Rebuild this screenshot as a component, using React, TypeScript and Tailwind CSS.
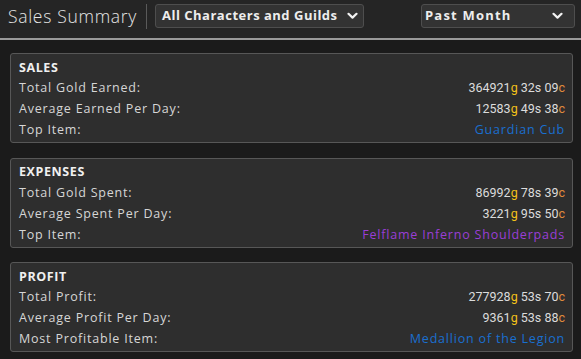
import React from 'react';

type Money = { g: string; s: string; c: string };

interface Row {
  label: string;
  money?: Money;
  item?: { name: string; color: string };
}

interface Section {
  title: string;
  rows: Row[];
}

const sections: Section[] = [
  {
    title: 'SALES',
    rows: [
      { label: 'Total Gold Earned:', money: { g: '364921', s: '32', c: '09' } },
      { label: 'Average Earned Per Day:', money: { g: '12583', s: '49', c: '38' } },
      { label: 'Top Item:', item: { name: 'Guardian Cub', color: 'text-[#1a6fd0]' } },
    ],
  },
  {
    title: 'EXPENSES',
    rows: [
      { label: 'Total Gold Spent:', money: { g: '86992', s: '78', c: '39' } },
      { label: 'Average Spent Per Day:', money: { g: '3221', s: '95', c: '50' } },
      { label: 'Top Item:', item: { name: 'Felflame Inferno Shoulderpads', color: 'text-[#9a3ed6]' } },
    ],
  },
  {
    title: 'PROFIT',
    rows: [
      { label: 'Total Profit:', money: { g: '277928', s: '53', c: '70' } },
      { label: 'Average Profit Per Day:', money: { g: '9361', s: '53', c: '88' } },
      { label: 'Most Profitable Item:', item: { name: 'Medallion of the Legion', color: 'text-[#1a6fd0]' } },
    ],
  },
];

const Chevron = () => (
  <svg width="11" height="8" viewBox="0 0 11 8" fill="none">
    <path d="M1.5 1.8 L5.5 5.6 L9.5 1.8" stroke="#f2f2f2" strokeWidth="2.2" strokeLinecap="round" strokeLinejoin="round" />
  </svg>
);

const MoneyText: React.FC<{ m: Money }> = ({ m }) => (
  <span className="font-['Roboto',sans-serif] text-[12.5px] text-[#dcdcdc]">
    {m.g}<span className="text-[#f4c21a]">g</span> {m.s}s {m.c}<span className="text-[#e08a3c]">c</span>
  </span>
);

const App: React.FC = () => {
  return (
    <div className="w-[581px] h-[359px] bg-[#1b1b1b] overflow-hidden font-['Open_Sans',sans-serif]">
      {/* Header */}
      <div className="h-[40px] bg-[#252525] border-b-2 border-[#9a9a9a] flex items-start pt-[4px]">
        <div className="h-[24px] flex items-center pl-[8px] text-[17.5px] font-light text-[#e6e6e6] tracking-[0.7px] w-[145px]">
          Sales Summary
        </div>
        <div className="w-px h-[25px] bg-[#5a5a5a] ml-px" />
        <button className="ml-[8px] w-[209px] h-[24px] bg-[#333333] border border-[#4e4e4e] rounded-[3px] flex items-center pl-[6px] gap-[9px] text-[13px] font-bold text-[#ededed] tracking-[0.5px]">
          All Characters and Guilds
          <Chevron />
        </button>
        <button className="ml-[57px] w-[154px] h-[24px] bg-[#333333] border border-[#4e4e4e] rounded-[3px] flex items-center justify-between pl-[3px] pr-[11px] text-[13px] font-bold text-[#ededed] tracking-[1.2px]">
          Past Month
          <Chevron />
        </button>
      </div>

      {/* Sections */}
      <div className="pt-[13px] pl-[10px] pr-[8px] flex flex-col gap-[14.5px]">
        {sections.map(sec => (
          <div key={sec.title} className="h-[90px] bg-[#2e2e2e] border border-[#575757] rounded-[3px] pt-[4px] pl-[8px] pr-[7px]">
            <div className="h-[20px] flex items-center text-[12.5px] font-bold text-[#f0f0f0] tracking-[0.6px]">
              {sec.title}
            </div>
            {sec.rows.map(row => (
              <div key={row.label} className="h-[21px] flex items-center justify-between">
                <span className="text-[12.5px] text-[#d6d6d6] tracking-[0.8px]">{row.label}</span>
                {row.money && <MoneyText m={row.money} />}
                {row.item && (
                  <span className={`text-[12.5px] tracking-[0.8px] ${row.item.color}`}>{row.item.name}</span>
                )}
              </div>
            ))}
          </div>
        ))}
      </div>
    </div>
  );
};

export default App;
